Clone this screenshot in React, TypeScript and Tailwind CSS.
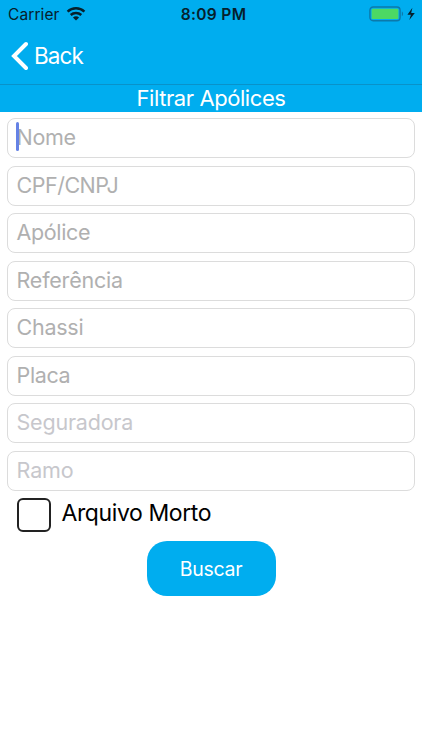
import { useState } from "react";

type Field = {
  id: string;
  label: string;
  spacing: string;
  picker?: boolean;
};

const fields: Field[] = [
  { id: "nome", label: "Nome", spacing: "tracking-[-0.3px]" },
  { id: "cpf", label: "CPF/CNPJ", spacing: "tracking-[-0.5px]" },
  { id: "apolice", label: "Apólice", spacing: "tracking-[-0.35px]" },
  { id: "referencia", label: "Referência", spacing: "tracking-[-0.2px]" },
  { id: "chassi", label: "Chassi", spacing: "tracking-[-0.25px]" },
  { id: "placa", label: "Placa", spacing: "tracking-[-0.35px]" },
  { id: "seguradora", label: "Seguradora", spacing: "tracking-[-0.2px]", picker: true },
  { id: "ramo", label: "Ramo", spacing: "tracking-[-0.1px]", picker: true },
];

function WifiIcon() {
  return (
    <svg className="h-[14px] w-[20px]" viewBox="0 0 20 14" fill="none" stroke="#06202c" strokeWidth="2.5">
      <path d="M1.6 4.6a12.3 12.3 0 0 1 16.8 0" />
      <path d="M4.7 8a7.8 7.8 0 0 1 10.6 0" />
      <path d="M6.9 10.6a4.6 4.6 0 0 1 6.2 0L10 13.6Z" fill="#06202c" stroke="none" />
    </svg>
  );
}

function BatteryIcon() {
  return (
    <svg className="h-[16px] w-[48px]" viewBox="0 0 48 16" fill="none">
      <rect x="0.9" y="1" width="30.2" height="13.8" rx="3.2" stroke="#0b79ab" strokeWidth="1.4" />
      <rect x="2.6" y="2.7" width="26.8" height="10.4" rx="1.2" fill="#4cd964" />
      <path d="M32.8 5.6c1.7.6 1.7 4 0 4.6Z" fill="#0b79ab" />
      <path d="M43.4 1.8 38.4 8.7h3.5l-1.6 5.4 5.5-7.2h-3.6Z" fill="#06202c" />
    </svg>
  );
}

function StatusBar() {
  return (
    <div className="grid h-[28px] grid-cols-3 items-center pl-2 pr-[5px] text-[15.5px] text-[#06202c]">
      <div className="flex items-center gap-[6px]">
        <span className="pt-[2px] tracking-[0.1px]">Carrier</span>
        <WifiIcon />
      </div>
      <span className="pl-[2px] pt-[2px] text-center font-semibold tracking-[0.35px]">8:09 PM</span>
      <div className="flex justify-end">
        <BatteryIcon />
      </div>
    </div>
  );
}

export default function App() {
  const [archived, setArchived] = useState(false);

  return (
    <div className="h-[750px] w-full overflow-hidden bg-white font-['Inter',sans-serif] text-black">
      <header className="bg-[#00adef]">
        <StatusBar />
        <button className="flex h-[56px] items-center gap-[6px] pl-[11px] text-[22.5px] text-white">
          <svg className="h-[30px] w-[17px]" viewBox="0 0 17 30" fill="none">
            <path d="M15 3 3 15l12 12" stroke="white" strokeWidth="4" strokeLinecap="round" />
          </svg>
          <span className="tracking-[-0.9px]">Back</span>
        </button>
        <h1 className="h-[28px] border-t border-[#0992c9] text-center text-[22px] leading-[27px] tracking-[-0.42px] text-white">
          Filtrar Apólices
        </h1>
      </header>

      <main className="px-[7px] pt-[6px]">
        <div className="flex flex-col gap-[7.5px]">
          {fields.map((field, index) => (
            <div
              key={field.id}
              className={[
                "relative flex h-[40px] items-center rounded-[8px] border border-[#dcdcdc] pb-[2px] pl-[8.5px] text-[21.5px] leading-[26px]",
                field.picker ? "text-[#c7c7cc]" : "text-[#b0b0b0]",
              ].join(" ")}
            >
              {index === 0 && (
                <span className="absolute left-[8px] top-[3px] h-[29px] w-[2.5px] rounded-full bg-[#6582e5]" />
              )}
              <span className={field.spacing}>{field.label}</span>
            </div>
          ))}
        </div>

        <button
          className="ml-[10px] mt-[7px] flex h-[34px] items-center gap-[10.5px]"
          onClick={() => setArchived(!archived)}
        >
          <span className="flex size-[34px] items-center justify-center rounded-[6px] border-2 border-[#222] text-[22px]">
            {archived ? "✓" : ""}
          </span>
          <span className="-mt-[2px] text-[23px] tracking-[-0.4px]">Arquivo Morto</span>
        </button>

        <button className="mx-auto mt-[9px] block h-[55px] w-[129px] rounded-[20px] bg-[#00adef] pt-[3px] text-[19.5px] tracking-[-0.3px] text-white">
          Buscar
        </button>
      </main>
    </div>
  );
}
